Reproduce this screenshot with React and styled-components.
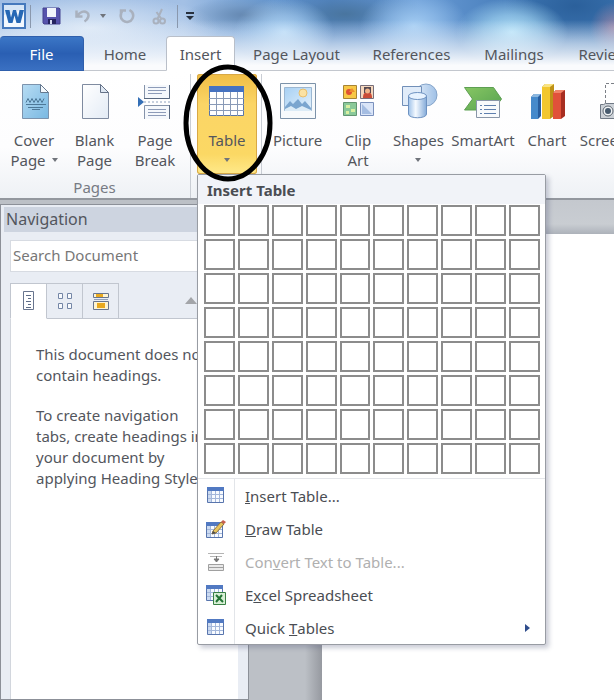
import React from "react";
import styled, { createGlobalStyle, css } from "styled-components";

const GlobalStyle = createGlobalStyle`
  *, *::before, *::after { box-sizing: border-box; }
  body {
    margin: 0;
    font-family: "Noto Sans", "Open Sans", sans-serif;
    font-size: 15px;
    line-height: 20px;
    color: #53565d;
    background: #fff;
  }
  button, input { font: inherit; color: inherit; }
  button { border: 0; padding: 0; background: none; white-space: nowrap; }
`;

const Window = styled.div`
  display: flex;
  flex-direction: column;
  min-height: 100vh;
  overflow: hidden;
`;

const TitleArea = styled.header`
  background:
    linear-gradient(to bottom, transparent 28%, #eef4fba0 62%, #fafbfd 92%),
    radial-gradient(ellipse 24px 26px at 614px 28px, #c98fa4a0 0, transparent 100%),
    radial-gradient(ellipse 56px 34px at 512px 32px, #b4e2f9 0, #a9dcf6a0 50%, transparent 100%),
    radial-gradient(ellipse 70px 34px at 575px 6px, #2b609b 0, #2f66a2c0 55%, transparent 100%),
    radial-gradient(ellipse 54px 36px at 414px 26px, #a4cdf3 0, #98c3eea0 50%, transparent 100%),
    radial-gradient(ellipse 50px 34px at 284px 32px, #b5d9f7 0, #a9d0f3a0 50%, transparent 100%),
    radial-gradient(ellipse 80px 26px at 345px 14px, #49759f 0, #527faf80 55%, transparent 100%),
    radial-gradient(ellipse 60px 18px at 245px 15px, #6588b1 0, #7194bc80 55%, transparent 100%),
    radial-gradient(ellipse 130px 34px at 90px 28px, #dce8f6 0, #d0e0f3a0 55%, transparent 100%),
    linear-gradient(to right, #9fbde4 0, #a3c0e5 30%, #6b9bd2 42%, #4d82c2 54%, #699bd5 68%, #4a80bd 82%, #4379b5 100%);
`;

const QuickAccess = styled.div`
  display: flex;
  align-items: center;
  height: 36px;
  padding: 0 2px 4px;
`;

const QuickButton = styled.button`
  display: flex;
  align-items: center;
  justify-content: center;
  width: ${(p) => p.$width}px;
  height: 26px;
`;

const QuickDivider = styled.span`
  width: 1px;
  height: 23px;
  margin: 0 4px;
  background: #8a98ad;
`;

const TabStrip = styled.nav`
  display: flex;
  height: 35px;
  border-bottom: 1px solid #c3c7ce;
`;

const Tab = styled.button`
  flex: none;
  height: 35px;
  width: ${(p) => p.$width}px;
  border-radius: 4px 4px 0 0;
  ${(p) => p.$kind === "file" && css`
    color: #fff;
    background: linear-gradient(#3b76c6, #2a5fb3 50%, #3a70c2);
    border: 1px solid #2f5fac;
    border-left: 0;
  `}
  ${(p) => p.$kind === "active" && css`
    background: #fff;
    border: 1px solid #b9bfc9;
    border-bottom-color: #fff;
  `}
`;

const Ribbon = styled.section`
  display: flex;
  height: 129px;
  padding-top: 3px;
  background: linear-gradient(#fff 0, #fdfdfe 60%, #eef1f5 100%);
  border-bottom: 2px solid #93979e;
`;

const Group = styled.div`
  flex: none;
  display: flex;
  flex-direction: column;
  padding: 0 ${(p) => p.$padRight}px 0 ${(p) => p.$padLeft}px;
  border-right: 1px solid #c9cdd4;
`;

const GroupButtons = styled.div`
  display: flex;
  height: 103px;
`;

const GroupLabel = styled.div`
  text-align: center;
  color: #777b84;
`;

const CommandButton = styled.button`
  flex: none;
  display: flex;
  flex-direction: column;
  align-items: center;
  width: ${(p) => p.$width}px;
  height: 100px;
  padding-top: 6px;
  border-radius: 3px;
  ${(p) => p.$pressed && css`
    background: linear-gradient(#f0bd45, #fbd566 30%, #fbd864 80%, #ffe98a);
    box-shadow: inset 0 0 0 1px #d8a845;
  `}
  svg { flex: none; }
`;

const CommandLabel = styled.span`
  display: flex;
  flex-direction: column;
  align-items: center;
  margin-top: 10px;
`;

const LabelLine = styled.span`
  display: flex;
  align-items: center;
  gap: 6px;
  min-height: 20px;
`;

const Caret = styled.span`
  border: solid transparent;
  border-width: 4px 3px 0;
  border-top-color: #70747b;
`;

const MenuAnchor = styled.div`
  position: relative;
`;

const Highlight = styled.svg`
  position: absolute;
  z-index: 3;
  top: -10px;
  left: -15px;
  pointer-events: none;
`;

const Menu = styled.div`
  position: absolute;
  z-index: 2;
  top: 100px;
  left: 0;
  width: 349px;
  background: #fff;
  border: 1px solid #989ca3;
  border-radius: 2px;
  box-shadow: 3px 3px 5px #5c648055;
  color: #4a4d53;
`;

const MenuTitle = styled.h2`
  margin: 0;
  padding: 4px 9px 3px;
  font-size: 15px;
  line-height: 22px;
  font-weight: 700;
  background: #f1f3f8;
`;

const SizeGrid = styled.div`
  display: grid;
  grid-template-columns: repeat(10, 1fr);
  grid-auto-rows: 31px;
  gap: 3px;
  padding: 1px 5px 4px 6px;
  border-bottom: 1px solid #e4e6ea;
`;

const SizeCell = styled.button`
  border: 2px solid #8c8c8c;
  background: #fff;
`;

const MenuItem = styled.button`
  display: flex;
  align-items: stretch;
  width: 100%;
  height: 33px;
  text-align: left;
  &:disabled { color: #b0b0b0; }
`;

const MenuIcon = styled.span`
  display: flex;
  align-items: center;
  justify-content: center;
  width: 37px;
  border-right: 1px solid #e2e5e9;
`;

const MenuText = styled.span`
  display: flex;
  align-items: center;
  flex: 1;
  padding-left: 10px;
  white-space: pre;
`;

const SubmenuArrow = styled.span`
  align-self: center;
  margin-right: 15px;
  border: solid transparent;
  border-width: 4px 0 4px 5px;
  border-left-color: #2f4d8c;
`;

const Workspace = styled.main`
  flex: 1;
  display: flex;
  background: #bcc0c6;
`;

const NavPane = styled.aside`
  flex: none;
  display: flex;
  flex-direction: column;
  width: 249px;
  margin-top: 4px;
  padding: 2px 10px 0 9px;
  border: solid #8c9098;
  border-width: 1px;
  background: #e9edf4;
`;

const NavTitle = styled.h2`
  margin: 0 -10px 8px -6px;
  padding: 0 2px;
  font-size: 16px;
  line-height: 25px;
  font-weight: 400;
  background: #cdd4e0;
`;

const SearchBox = styled.input`
  width: 100%;
  height: 32px;
  padding: 0 2px 2px;
  border: 1px solid #d7dbe2;
  background: #fff;
  &::placeholder { color: #777; opacity: 1; }
`;

const NavTabs = styled.div`
  display: flex;
  align-items: flex-end;
  margin-top: 11px;
  height: 36px;
  border-bottom: 1px solid #c1c6cf;
`;

const NavTab = styled.button`
  display: flex;
  align-items: center;
  justify-content: center;
  width: ${(p) => (p.$active ? 37 : 36)}px;
  height: 36px;
  margin-bottom: -1px;
  border: 1px solid #c1c6cf;
  border-left-width: ${(p) => (p.$active ? 1 : 0)}px;
  ${(p) => p.$active && css`
    background: #fff;
    border-bottom-color: #fff;
  `}
`;

const NavPrevious = styled.button`
  align-self: center;
  margin-left: 66px;
  border: solid transparent;
  border-width: 0 6px 7px;
  border-bottom-color: #a3a5a9;
`;

const NavBody = styled.div`
  flex: 1;
  padding: 25px 10px 0 25px;
  background: #fff;
  border-left: 1px solid #d2d6dd;
  white-space: pre;
  p { margin: 0 0 19px; line-height: 21px; }
`;

const DocumentArea = styled.div`
  flex: 1;
  display: flex;
  padding: 34px 0 0 73px;
  background:
    linear-gradient(to bottom, #c4c8ce, #c9cdd2 24px, #adb2ba 34px, transparent 34px),
    linear-gradient(to right, #bcc0c6 56px, #9699a0 73px);
`;

const Sheet = styled.div`
  flex: 1;
  background: #fff;
`;

function WordLogo() {
  return (
    <svg width="24" height="26" viewBox="0 0 24 26" aria-hidden="true">
      <rect x="1" y="1" width="22" height="24" fill="#f3f8fe" stroke="#4579bd" strokeWidth="2" />
      <path d="M2 2h20v4L2 12z" fill="#d5e5f6" />
      <path d="M3 7h4.500l1.500 7.500L11 7h3l2 7.500L17.500 7H22l-3.500 13h-4l-2-7.500L10.500 20h-4z" fill="#2668b5" />
    </svg>
  );
}

function SaveIcon() {
  return (
    <svg width="19" height="18" viewBox="0 0 19 18" aria-hidden="true">
      <path d="M1 1h16l1 1v15H2l-1-1z" fill="#5653ac" stroke="#45428f" />
      <path d="M5 1h9v9H5z" fill="#f1f4fb" />
      <path d="M6 12h8v5H6z" fill="#24235f" />
      <path d="M8 13h2v4H8z" fill="#d6daf0" />
    </svg>
  );
}

function UndoIcon() {
  return (
    <svg width="15" height="14" viewBox="0 0 15 14" fill="none" stroke="#a9b1be" strokeWidth="2.500" aria-hidden="true">
      <path d="M1.500 1.500v6h6M2 7C5 3 9 1.500 12 3.500s1 7-2.500 9" />
    </svg>
  );
}

function RedoIcon() {
  return (
    <svg width="16" height="16" viewBox="0 0 16 16" fill="none" stroke="#a9b1be" strokeWidth="2.500" aria-hidden="true">
      <path d="M7 2.500H2v5M3 3.500C1 7 1 10 4 12.500s8 1.500 9.500-2S14 4 10.500 2" />
    </svg>
  );
}

function CutIcon() {
  return (
    <svg width="14" height="17" viewBox="0 0 14 17" fill="none" stroke="#a9b1be" strokeWidth="2" aria-hidden="true">
      <path d="M10 1 5.500 11M4.500 4l5 7" />
      <circle cx="4" cy="13" r="2.500" />
      <circle cx="10.500" cy="13" r="2.500" />
    </svg>
  );
}

function CustomizeIcon() {
  return (
    <svg width="10" height="9" viewBox="0 0 10 9" fill="#27303d" aria-hidden="true">
      <path d="M1 0h8v2H1zM1 4h8L5 8z" />
    </svg>
  );
}

const Icon40 = ({ children }) => (
  <svg width="40" height="40" viewBox="0 0 40 40" aria-hidden="true">{children}</svg>
);

function CoverIcon() {
  return (
    <Icon40>
      <defs>
        <linearGradient id="cover" x2="1" y2="1"><stop stopColor="#b7dcf3" /><stop offset="1" stopColor="#79b8e2" /></linearGradient>
      </defs>
      <path d="M8.500 4.500h18l8 8v26h-26z" fill="url(#cover)" stroke="#7c93ad" />
      <path d="M26.500 4.500v8h8z" fill="#f4f9fd" stroke="#64788f" />
      <path d="M12 22.500l2-4 2 4 2-4 2 4 2-4 2 4 2-4 2 4 2-4M12 24.500h20M14 27.500h15M18 29.500h8" stroke="#4d7898" fill="none" />
    </Icon40>
  );
}

function BlankIcon() {
  return (
    <Icon40>
      <defs>
        <linearGradient id="blank" x2="1" y2="1"><stop stopColor="#fff" /><stop offset="1" stopColor="#e3ebf5" /></linearGradient>
      </defs>
      <path d="M7.500 4.500h18l8 8v26h-26z" fill="url(#blank)" stroke="#7f8ba0" />
      <path d="M25.500 4.500v8h8z" fill="#dfe8f3" stroke="#657288" />
    </Icon40>
  );
}

function BreakIcon() {
  return (
    <Icon40>
      <path d="M9.500 5v13.500h25V5M9.500 39V25.500h25V39" fill="#f5f8fc" stroke="#8593aa" />
      <path d="M34.500 5v13.500H9M34.500 25v14" fill="none" stroke="#596981" />
      <path d="M13 7.500h18M13 10.500h18M13 13.500h14M13 29.500h18M13 32.500h18M13 35.500h18" stroke="#8d9bb8" />
      <path d="M9 22h27" stroke="#8fa2be" strokeDasharray="2 2" />
      <path d="M3 17l6 5-6 5z" fill="#346fb6" />
    </Icon40>
  );
}

function TableIcon() {
  return (
    <Icon40>
      <path d="M2.500 6.500h34v29h-34z" fill="#fff" stroke="#5976a8" />
      <path d="M2 6h35v6H2z" fill="#4572c0" />
      <path d="M2 18.500h35M2 24.500h35M2 30.500h35M9.500 12v24M16.500 12v24M23.500 12v24M30.500 12v24" stroke="#899ab7" />
    </Icon40>
  );
}

function PictureIcon() {
  return (
    <Icon40>
      <defs>
        <linearGradient id="sky" y2="1"><stop stopColor="#a7d0f3" /><stop offset="1" stopColor="#e5f2fc" /></linearGradient>
      </defs>
      <path d="M2.500 3.500h35v35h-35z" fill="#f7fafc" stroke="#7c92a9" />
      <path d="M6.500 7.500h27v23h-27z" fill="url(#sky)" stroke="#9bb7d2" />
      <circle cx="25" cy="13" r="4" fill="#fbe2a3" stroke="#eabf6b" />
      <path d="M7 27l5-6 3 3 5-5 4 5 3-3 6 7v3H7z" fill="#7ba6cf" />
      <path d="M7 29l6-3 5 3 6-3 9 4v1H7z" fill="#dcecf7" />
    </Icon40>
  );
}

function ClipArtIcon() {
  return (
    <Icon40>
      <path d="M5.500 5.500h13v13h-13z" fill="#f8c846" stroke="#a68435" />
      <circle cx="11" cy="12" r="3" fill="#df5134" /><path d="M11 12h6l-3-4z" fill="#ed8f2e" />
      <path d="M22.500 5.500h13v13h-13z" fill="#f5d7bc" stroke="#776e79" />
      <path d="M25 18c0-5 2-6 4.500-6s4.500 1 4.500 6z" fill="#c94c37" />
      <path d="M26 7h7v6h-7z" fill="#554951" /><circle cx="29.500" cy="11" r="2.500" fill="#efb489" />
      <path d="M5.500 22.500h13v13h-13z" fill="#8ac99a" stroke="#639572" />
      <path d="M8 25h4v3H8zM13 29h4v3h-4zM8 31h3v3H8z" fill="#d9efa1" />
      <path d="M22.500 22.500h13v13h-13z" fill="#dae5f8" stroke="#7b91bd" />
      <path d="M24 24v10h10z" fill="#a5bde2" />
    </Icon40>
  );
}

function ShapesIcon() {
  return (
    <Icon40>
      <defs>
        <linearGradient id="disc" x2="1"><stop stopColor="#e3eefa" /><stop offset="1" stopColor="#9fc0e6" /></linearGradient>
        <linearGradient id="tube" x2="1"><stop stopColor="#9fc2e9" /><stop offset=".4" stopColor="#f5faff" /><stop offset="1" stopColor="#84abd9" /></linearGradient>
      </defs>
      <circle cx="27" cy="15" r="11" fill="url(#disc)" stroke="#86a5ca" />
      <path d="M3.500 6.500h19v19h-19z" fill="#e1ecf9" stroke="#718fb8" />
      <path d="M9.500 16v18c0 5 18 5 18 0V16z" fill="url(#tube)" stroke="#6e92c1" />
      <ellipse cx="18.500" cy="16" rx="9" ry="3.500" fill="#e8f3ff" stroke="#6e92c1" />
    </Icon40>
  );
}

function SmartArtIcon() {
  return (
    <Icon40>
      <defs>
        <linearGradient id="arrow" y2="1"><stop stopColor="#87c663" /><stop offset="1" stopColor="#56a250" /></linearGradient>
      </defs>
      <path d="M1.500 7.500h29l8 11.500-8 11h-29l8-11z" fill="url(#arrow)" stroke="#5d9f52" />
      <path d="M13.500 20.500h23v17h-23z" fill="#f8fafc" stroke="#8996a8" />
      <path d="M17 25.500h2M17 29.500h2M17 33.500h2M21 25.500h12M21 29.500h12M21 33.500h12" stroke="#5e7fae" />
    </Icon40>
  );
}

function ChartIcon() {
  return (
    <Icon40>
      <path d="M4 17l3-3h7v22l-3 3H4z" fill="#285d9e" /><path d="M4 17h7v22H4z" fill="#468acb" /><path d="M4 17l3-3h7l-3 3z" fill="#8bb7df" />
      <path d="M15 7l3-3h9v32l-4 3h-8z" fill="#bd9117" /><path d="M15 7h8v32h-8z" fill="#f2c72f" /><path d="M15 7l3-3h9l-4 3z" fill="#f9e382" />
      <path d="M26 13l3-3h9v26l-4 3h-8z" fill="#a72e21" /><path d="M26 13h8v26h-8z" fill="#e1513a" /><path d="M26 13l3-3h9l-4 3z" fill="#f18469" />
    </Icon40>
  );
}

function ScreenshotIcon() {
  return (
    <Icon40>
      <path d="M6.500 23V3.500H38V23" fill="none" stroke="#7c8087" strokeDasharray="3 2" />
      <path d="M1.500 24.500h3l2-1h12l2 1h3v14h-22z" fill="#ccd1d7" stroke="#707985" />
      <circle cx="9" cy="31" r="5" fill="#f1f4f6" stroke="#5d6670" strokeWidth="1" />
      <circle cx="9" cy="31" r="3" fill="#485b6e" />
    </Icon40>
  );
}

function SmallTable() {
  return (
    <>
      <path d="M1.500 1.500h16v15h-16z" fill="#f8fbff" stroke="#5875ad" />
      <path d="M1 1h17v4H1z" fill="#5179c2" />
      <path d="M2 5h4v11H2z" fill="#cbdaf1" />
      <path d="M2 8.500h15M2 12.500h15M5.500 5v11M9.500 5v11M13.500 5v11" stroke="#a4b7da" />
    </>
  );
}

const Icon20 = ({ children }) => (
  <svg width="20" height="20" viewBox="0 0 20 20" aria-hidden="true">{children}</svg>
);

const InsertTableIcon = () => <Icon20><SmallTable /></Icon20>;

const DrawTableIcon = () => (
  <Icon20>
    <g transform="translate(-1 2)"><SmallTable /></g>
    <path d="M7 12l8-9 3 2-8 9-4 1z" fill="#e8c45e" stroke="#8c713d" />
    <path d="M15 3l2-2 3 2-2 2z" fill="#c95f4e" /><path d="M7 12l-1 3 4-1z" fill="#474c55" />
  </Icon20>
);

const ConvertIcon = () => (
  <Icon20>
    <path d="M2 1.500h16M4 4.500h12" stroke="#b4b4b4" />
    <path d="M10.500 4v5M8 7h5l-2.500 3z" stroke="#777" fill="#777" />
    <path d="M2.500 12.500h15v6h-15zM2.500 15.500h15" stroke="#a0a0a0" fill="#e9e9e9" />
  </Icon20>
);

const ExcelIcon = () => (
  <Icon20>
    <g transform="translate(-1 -1)"><SmallTable /></g>
    <path d="M7.500 7.500h12v12h-12z" fill="#d7efd5" stroke="#398044" />
    <path d="M10 10l7 7M16 10l-6 7" stroke="#237434" strokeWidth="2" />
  </Icon20>
);

function HeadingsIcon() {
  return (
    <svg width="12" height="20" viewBox="0 0 12 20" aria-hidden="true">
      <path d="M.5.5h10v18H.5z" fill="#fff" stroke="#68758e" />
      <path d="M3 4.500h5M5 7.500h3M3 10.500h5M5 13.500h3M3 16.500h5" stroke="#5e6d88" />
    </svg>
  );
}

function PagesIcon() {
  return (
    <svg width="16" height="18" viewBox="0 0 16 18" fill="#f8fafd" stroke="#7486a6" aria-hidden="true">
      <path d="M1.500 1.500h4v5h-4zM10.500 1.500h4v5h-4zM1.500 11.500h4v5h-4zM10.500 11.500h4v5h-4z" />
    </svg>
  );
}

function ResultsIcon() {
  return (
    <svg width="16" height="19" viewBox="0 0 16 19" aria-hidden="true">
      <path d="M.5 1.500h15v4H.5zM.5 9.500h15v8H.5z" fill="#fff4cf" stroke="#68758e" />
      <path d="M3 2h7v3H3zM4 11h8v5H4z" fill="#e9a91f" />
      <path d="M1 7.500h14" stroke="#92a0b7" />
    </svg>
  );
}

const tabs = [
  { label: "File", width: 84, kind: "file" },
  { label: "Home", width: 82 },
  { label: "Insert", width: 69, kind: "active" },
  { label: "Page Layout", width: 123 },
  { label: "References", width: 107 },
  { label: "Mailings", width: 98 },
  { label: "Review", width: 80 },
];

const pageCommands = [
  { lines: ["Cover", "Page"], width: 60, icon: CoverIcon, caret: true },
  { lines: ["Blank", "Page"], width: 61, icon: BlankIcon },
  { lines: ["Page", "Break"], width: 60, icon: BreakIcon },
];

const illustrationCommands = [
  { lines: ["Picture"], width: 61, icon: PictureIcon },
  { lines: ["Clip", "Art"], width: 60, icon: ClipArtIcon },
  { lines: ["Shapes", ""], width: 61, icon: ShapesIcon, caret: true },
  { lines: ["SmartArt"], width: 68, icon: SmartArtIcon },
  { lines: ["Chart"], width: 60, icon: ChartIcon },
  { lines: ["Screenshot"], width: 84, icon: ScreenshotIcon },
];

const menuItems = [
  { before: "", key: "I", after: "nsert Table...", icon: InsertTableIcon },
  { before: "", key: "D", after: "raw Table", icon: DrawTableIcon },
  { before: "Con", key: "v", after: "ert Text to Table...", icon: ConvertIcon, disabled: true },
  { before: "E", key: "x", after: "cel Spreadsheet", icon: ExcelIcon },
  { before: "Quick ", key: "T", after: "ables", icon: InsertTableIcon, submenu: true },
];

function Command({ lines, width, icon: Icon, caret, pressed }) {
  return (
    <CommandButton $width={width} $pressed={pressed} aria-pressed={pressed}>
      <Icon />
      <CommandLabel>
        {lines.map((line, i) => (
          <LabelLine key={i}>
            {line}
            {caret && i === lines.length - 1 && <Caret />}
          </LabelLine>
        ))}
      </CommandLabel>
    </CommandButton>
  );
}

function TableMenu() {
  return (
    <Menu role="menu" aria-label="Insert Table">
      <MenuTitle>Insert Table</MenuTitle>
      <SizeGrid>
        {Array.from({ length: 80 }, (_, i) => (
          <SizeCell key={i} aria-label={`${(i % 10) + 1} by ${Math.floor(i / 10) + 1}`} />
        ))}
      </SizeGrid>
      {menuItems.map(({ before, key, after, icon: Icon, disabled, submenu }) => (
        <MenuItem key={after} role="menuitem" disabled={disabled}>
          <MenuIcon><Icon /></MenuIcon>
          <MenuText>{before}<u>{key}</u>{after}</MenuText>
          {submenu && <SubmenuArrow />}
        </MenuItem>
      ))}
    </Menu>
  );
}

export default function App() {
  return (
    <Window>
      <GlobalStyle />
      <TitleArea>
        <QuickAccess>
          <QuickButton $width={24} aria-label="Word"><WordLogo /></QuickButton>
          <QuickDivider />
          <QuickButton $width={32} aria-label="Save"><SaveIcon /></QuickButton>
          <QuickButton $width={30} aria-label="Undo"><UndoIcon /></QuickButton>
          <QuickButton $width={12} aria-label="Undo history"><Caret /></QuickButton>
          <QuickButton $width={36} aria-label="Redo"><RedoIcon /></QuickButton>
          <QuickButton $width={28} aria-label="Cut"><CutIcon /></QuickButton>
          <QuickDivider />
          <QuickButton $width={16} aria-label="Customize toolbar"><CustomizeIcon /></QuickButton>
        </QuickAccess>
        <TabStrip>
          {tabs.map((tab) => (
            <Tab key={tab.label} $width={tab.width} $kind={tab.kind}>{tab.label}</Tab>
          ))}
        </TabStrip>
      </TitleArea>
      <Ribbon>
        <Group $padLeft={4} $padRight={5}>
          <GroupButtons>
            {pageCommands.map((c) => <Command key={c.lines.join()} {...c} />)}
          </GroupButtons>
          <GroupLabel>Pages</GroupLabel>
        </Group>
        <Group $padLeft={6} $padRight={4}>
          <MenuAnchor>
            <Command lines={["Table", ""]} width={60} icon={TableIcon} caret pressed />
            <TableMenu />
            <Highlight width="92" height="120" viewBox="0 0 92 120" aria-hidden="true">
              <ellipse cx="46" cy="59" rx="42" ry="56" fill="none" stroke="#000" strokeWidth="5" />
            </Highlight>
          </MenuAnchor>
        </Group>
        <Group $padLeft={5} $padRight={4}>
          <GroupButtons>
            {illustrationCommands.map((c) => <Command key={c.lines.join()} {...c} />)}
          </GroupButtons>
        </Group>
      </Ribbon>
      <Workspace>
        <NavPane>
          <NavTitle>Navigation</NavTitle>
          <SearchBox type="text" placeholder="Search Document" aria-label="Search Document" />
          <NavTabs>
            <NavTab $active aria-label="Browse headings"><HeadingsIcon /></NavTab>
            <NavTab aria-label="Browse pages"><PagesIcon /></NavTab>
            <NavTab aria-label="Browse results"><ResultsIcon /></NavTab>
            <NavPrevious aria-label="Previous heading" />
          </NavTabs>
          <NavBody>
            <p>{"This document does not\ncontain headings."}</p>
            <p>{"To create navigation\ntabs, create headings in\nyour document by\napplying Heading Styles."}</p>
          </NavBody>
        </NavPane>
        <DocumentArea>
          <Sheet />
        </DocumentArea>
      </Workspace>
    </Window>
  );
}
